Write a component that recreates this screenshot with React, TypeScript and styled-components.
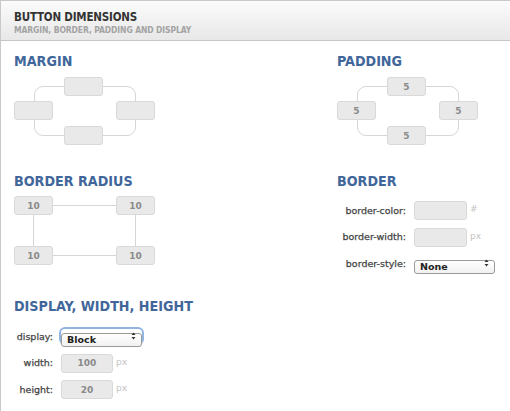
import React, { ReactElement } from "react";
import styled, { createGlobalStyle } from "styled-components";

const GlobalStyle = createGlobalStyle`
  html, body {
    margin: 0;
    padding: 0;
    background: #fff;
  }
  body {
    font-family: "Liberation Sans", Arial, sans-serif;
  }
`;

const condensed = `"DejaVu Sans Condensed", "DejaVu Sans", sans-serif`;

const Styled = {
  Panel: styled.div`
    width: 510px;
    height: 411px;
    box-sizing: border-box;
    border-top: 1px solid #c9c9c9;
    border-left: 1px solid #c9c9c9;
    overflow: hidden;
  `,
  Header: styled.div`
    height: 40px;
    box-sizing: border-box;
    padding: 9px 0 0 13px;
    background: linear-gradient(#fbfbfb, #e8e8e8);
    border-bottom: 1px solid #c6c6c6;
  `,
  Title: styled.h1`
    margin: 0;
    font-family: ${condensed};
    font-stretch: condensed;
    font-weight: bold;
    font-size: 11.5px;
    letter-spacing: -0.2px;
    line-height: 14px;
    color: #333;
  `,
  Subtitle: styled.h2`
    margin: 1px 0 0;
    font-family: ${condensed};
    font-stretch: condensed;
    font-weight: bold;
    font-size: 8.5px;
    letter-spacing: -0.1px;
    line-height: 11px;
    color: #a3a3a3;
  `,
  Body: styled.div`
    display: grid;
    grid-template-columns: 323px 1fr;
    grid-template-rows: 120px 125px auto;
    padding: 11px 0 0 13px;
  `,
  Section: styled.section`
    display: flex;
    flex-direction: column;
  `,
  Heading: styled.h3<{ $gap: number }>`
    margin: 0 0 ${(p) => p.$gap}px;
    font-family: ${condensed};
    font-stretch: condensed;
    font-weight: bold;
    font-size: 14.2px;
    line-height: 18px;
    color: #41669a;
  `,
  BoxDiagram: styled.div`
    display: grid;
    grid-template-columns: 50px 39px 52px;
    grid-template-rows: 24px 25px 19px;
    width: 141px;
  `,
  CornerDiagram: styled.div`
    display: grid;
    grid-template-columns: 102px 39px;
    grid-template-rows: 50px 19px;
    width: 141px;
  `,
  Frame: styled.div<{ $rounded?: boolean }>`
    grid-area: 1 / 1 / 4 / 4;
    margin: ${(p) => (p.$rounded ? "9px 19px 9px 20px" : "9px 19px 9px 19px")};
    border: 1px solid #d6d6d6;
    border-radius: ${(p) => (p.$rounded ? "9px" : "0")};
  `,
  Value: styled.input<{ $area: string; $justify?: string; $w?: number }>`
    grid-area: ${(p) => p.$area};
    justify-self: ${(p) => p.$justify || "start"};
    align-self: start;
    box-sizing: border-box;
    width: ${(p) => p.$w || 39}px;
    height: 19px;
    margin: 0;
    padding: 0;
    border: 1px solid #d9d9d9;
    border-radius: 3px;
    background: #e9e9e9;
    text-align: center;
    font-family: "DejaVu Sans", sans-serif;
    font-weight: bold;
    font-size: 9px;
    color: #8a8a8a;
    outline: none;
  `,
  Form: styled.div<{ $label: number; $field: number; $top: number }>`
    display: grid;
    grid-template-columns: ${(p) => p.$label}px ${(p) => p.$field}px 20px;
    grid-auto-rows: 18px;
    row-gap: 8.5px;
    column-gap: 8px;
    align-items: center;
    justify-content: start;
    margin-top: ${(p) => p.$top}px;
  `,
  Label: styled.label`
    text-align: right;
    font-family: "DejaVu Sans", sans-serif;
    font-size: 9.5px;
    color: #444;
    -webkit-text-stroke: 0.25px #444;
    white-space: nowrap;
  `,
  Unit: styled.span`
    margin-left: -5px;
    font-family: "DejaVu Sans", sans-serif;
    font-size: 9px;
    color: #c4c4c4;
    align-self: start;
    margin-top: 3px;
  `,
  SelectWrap: styled.div<{ $focus?: boolean }>`
    position: relative;
    grid-column: span 2;
    width: 81px;
    height: 14px;
    border-radius: 4px;
    box-shadow: ${(p) => (p.$focus ? "0 0 0 2px rgba(110, 155, 215, 0.75)" : "none")};
  `,
  Select: styled.select`
    appearance: none;
    -webkit-appearance: none;
    box-sizing: border-box;
    width: 100%;
    height: 100%;
    margin: 0;
    padding: 0 0 0 5px;
    border: 1px solid #9a9a9a;
    border-radius: 3px;
    background: linear-gradient(#ffffff, #f1f1f1);
    font-family: "DejaVu Sans", sans-serif;
    font-weight: bold;
    font-size: 9.5px;
    line-height: 12px;
    color: #222;
    outline: none;
  `,
  Arrows: styled.svg`
    position: absolute;
    right: 6px;
    top: 3px;
    pointer-events: none;
  `,
};

function Arrows(): ReactElement {
  return (
    <Styled.Arrows width="5" height="8" viewBox="0 0 5 8">
      <path d="M0.5 3 L2.5 0.5 L4.5 3 Z" fill="#333" />
      <path d="M0.5 5 L2.5 7.5 L4.5 5 Z" fill="#333" />
    </Styled.Arrows>
  );
}

function Dropdown({ value, focus }: { value: string; focus?: boolean }): ReactElement {
  return (
    <Styled.SelectWrap $focus={focus}>
      <Styled.Select defaultValue={value}>
        <option>{value}</option>
      </Styled.Select>
      <Arrows />
    </Styled.SelectWrap>
  );
}

function BoxDiagram({ value }: { value: string }): ReactElement {
  return (
    <Styled.BoxDiagram>
      <Styled.Frame $rounded />
      <Styled.Value $area="1 / 2" readOnly value={value} />
      <Styled.Value $area="2 / 1" readOnly value={value} />
      <Styled.Value $area="2 / 3" $justify="end" readOnly value={value} />
      <Styled.Value $area="3 / 2" readOnly value={value} />
    </Styled.BoxDiagram>
  );
}

export default function App(): ReactElement {
  return (
    <>
      <GlobalStyle />
      <Styled.Panel>
        <Styled.Header>
          <Styled.Title>BUTTON DIMENSIONS</Styled.Title>
          <Styled.Subtitle>MARGIN, BORDER, PADDING AND DISPLAY</Styled.Subtitle>
        </Styled.Header>
        <Styled.Body>
          <Styled.Section>
            <Styled.Heading $gap={7}>MARGIN</Styled.Heading>
            <BoxDiagram value="" />
          </Styled.Section>
          <Styled.Section>
            <Styled.Heading $gap={7}>PADDING</Styled.Heading>
            <BoxDiagram value="5" />
          </Styled.Section>

          <Styled.Section>
            <Styled.Heading $gap={6}>BORDER RADIUS</Styled.Heading>
            <Styled.CornerDiagram>
              <Styled.Frame />
              <Styled.Value $area="1 / 1" readOnly value="10" />
              <Styled.Value $area="1 / 2" readOnly value="10" />
              <Styled.Value $area="2 / 1" readOnly value="10" />
              <Styled.Value $area="2 / 2" readOnly value="10" />
            </Styled.CornerDiagram>
          </Styled.Section>
          <Styled.Section>
            <Styled.Heading $gap={0}>BORDER</Styled.Heading>
            <Styled.Form $label={69} $field={53} $top={11}>
              <Styled.Label>border-color:</Styled.Label>
              <Styled.Value $area="auto" $w={53} readOnly value="" />
              <Styled.Unit>#</Styled.Unit>
              <Styled.Label>border-width:</Styled.Label>
              <Styled.Value $area="auto" $w={53} readOnly value="" />
              <Styled.Unit>px</Styled.Unit>
              <Styled.Label>border-style:</Styled.Label>
              <Dropdown value="None" />
            </Styled.Form>
          </Styled.Section>

          <Styled.Section>
            <Styled.Heading $gap={0}>DISPLAY, WIDTH, HEIGHT</Styled.Heading>
            <Styled.Form $label={39} $field={52} $top={12}>
              <Styled.Label>display:</Styled.Label>
              <Dropdown value="Block" focus />
              <Styled.Label>width:</Styled.Label>
              <Styled.Value $area="auto" $w={52} readOnly value="100" />
              <Styled.Unit>px</Styled.Unit>
              <Styled.Label>height:</Styled.Label>
              <Styled.Value $area="auto" $w={52} readOnly value="20" />
              <Styled.Unit>px</Styled.Unit>
            </Styled.Form>
          </Styled.Section>
        </Styled.Body>
      </Styled.Panel>
    </>
  );
}
